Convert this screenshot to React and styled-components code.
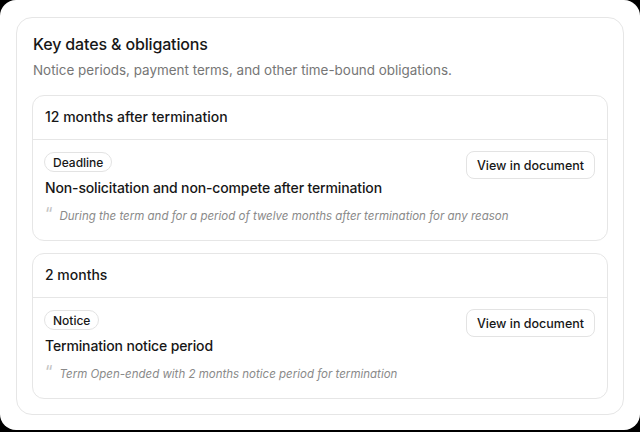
import React from "react";
import styled, { createGlobalStyle } from "styled-components";

const Global = createGlobalStyle`
  html, body { margin: 0; padding: 0; background: #000; }
  body { font-family: Inter, "Noto Sans", sans-serif; -webkit-font-smoothing: antialiased; }
  * { box-sizing: border-box; }
`;

const Frame = styled.div`
  width: 640px;
  height: 430px;
  background: #fff;
  border-radius: 16px;
  padding: 17px 16px 0 16px;
`;

const Panel = styled.section`
  border: 1px solid #e6e6e6;
  border-radius: 16px;
  padding: 16px 15px 15px 15px;
  display: flex;
  flex-direction: column;
`;

const Title = styled.h2`
  margin: 0 0 0 1px;
  font-size: 16px;
  line-height: 20px;
  font-weight: 500;
  color: #171717;
  letter-spacing: -0.15px;
`;

const Subtitle = styled.p`
  margin: 6px 0 0 1px;
  font-size: 13.45px;
  line-height: 20px;
  color: #767676;
`;

const List = styled.div`
  margin-top: 15px;
  display: flex;
  flex-direction: column;
  gap: 12px;
`;

const Card = styled.div`
  border: 1px solid #e6e6e6;
  border-radius: 12px;
`;

const CardHeader = styled.div`
  padding: 11px 12px 12px 12px;
  font-size: 14px;
  line-height: 20px;
  font-weight: 500;
  color: #171717;
  border-bottom: 1px solid #e6e6e6;
`;

const CardBody = styled.div`
  padding: 12px 12px 15px 11px;
  display: flex;
  flex-direction: column;
`;

const TopRow = styled.div`
  display: flex;
  align-items: flex-start;
  justify-content: space-between;
  gap: 12px;
`;

const Main = styled.div`
  display: flex;
  flex-direction: column;
  align-items: flex-start;
`;

const Badge = styled.span`
  display: inline-flex;
  align-items: center;
  height: 20px;
  padding: 0 8px;
  border: 1px solid #e3e3e3;
  border-radius: 999px;
  font-size: 12px;
  font-weight: 500;
  color: #171717;
`;

const ItemTitle = styled.div`
  margin-top: 6px;
  margin-left: 1px;
  font-size: 14px;
  line-height: 20px;
  font-weight: 500;
  color: #171717;
  letter-spacing: -0.14px;
`;

const Quote = styled.div`
  margin-top: 9px;
  margin-left: 1px;
  display: flex;
  align-items: flex-start;
  gap: 7px;
  font-size: 11.5px;
  line-height: 18px;
  font-style: italic;
  color: #8a8a8a;
`;

const QuoteMark = styled.span`
  font-style: normal;
  font-family: Inter, "DejaVu Sans", sans-serif;
  font-size: 17px;
  line-height: 14px;
  color: #c4c4c4;
`;

const Button = styled.button`
  flex: none;
  height: 28px;
  padding: 0 10px;
  border: 1px solid #e3e3e3;
  border-radius: 8px;
  background: #fff;
  font-family: inherit;
  font-size: 12.5px;
  font-weight: 500;
  color: #171717;
  margin-top: -1px;
`;

const items = [
  {
    when: "12 months after termination",
    tag: "Deadline",
    title: "Non-solicitation and non-compete after termination",
    quote: "During the term and for a period of twelve months after termination for any reason",
  },
  {
    when: "2 months",
    tag: "Notice",
    title: "Termination notice period",
    quote: "Term Open-ended with 2 months notice period for termination",
  },
];

export default function App() {
  return (
    <>
      <Global />
      <Frame>
        <Panel>
          <Title>Key dates &amp; obligations</Title>
          <Subtitle>Notice periods, payment terms, and other time-bound obligations.</Subtitle>
          <List>
            {items.map((it) => (
              <Card key={it.when}>
                <CardHeader>{it.when}</CardHeader>
                <CardBody>
                  <TopRow>
                    <Main>
                      <Badge>{it.tag}</Badge>
                      <ItemTitle>{it.title}</ItemTitle>
                    </Main>
                    <Button>View in document</Button>
                  </TopRow>
                  <Quote>
                    <QuoteMark>“</QuoteMark>
                    <span>{it.quote}</span>
                  </Quote>
                </CardBody>
              </Card>
            ))}
          </List>
        </Panel>
      </Frame>
    </>
  );
}
